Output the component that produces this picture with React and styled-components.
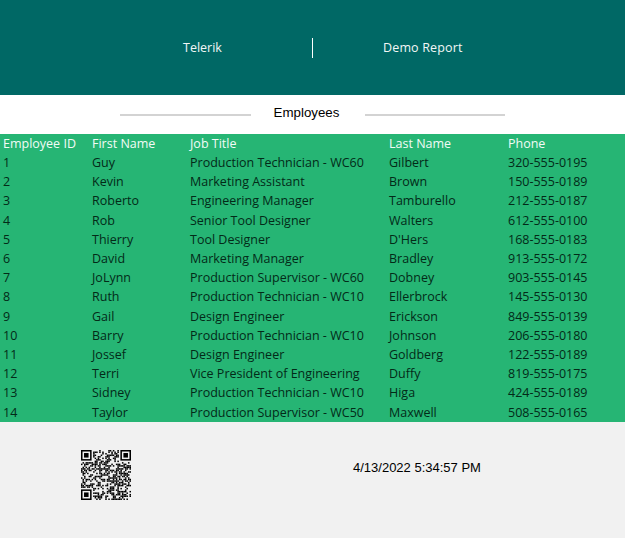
import React from 'react';
import styled, { createGlobalStyle } from 'styled-components';

const GlobalStyle = createGlobalStyle`
    html, body {
        margin: 0;
        padding: 0;
        background: #ffffff;
    }
`;

const employees = [
    [1, 'Guy', 'Production Technician - WC60', 'Gilbert', '320-555-0195'],
    [2, 'Kevin', 'Marketing Assistant', 'Brown', '150-555-0189'],
    [3, 'Roberto', 'Engineering Manager', 'Tamburello', '212-555-0187'],
    [4, 'Rob', 'Senior Tool Designer', 'Walters', '612-555-0100'],
    [5, 'Thierry', 'Tool Designer', "D'Hers", '168-555-0183'],
    [6, 'David', 'Marketing Manager', 'Bradley', '913-555-0172'],
    [7, 'JoLynn', 'Production Supervisor - WC60', 'Dobney', '903-555-0145'],
    [8, 'Ruth', 'Production Technician - WC10', 'Ellerbrock', '145-555-0130'],
    [9, 'Gail', 'Design Engineer', 'Erickson', '849-555-0139'],
    [10, 'Barry', 'Production Technician - WC10', 'Johnson', '206-555-0180'],
    [11, 'Jossef', 'Design Engineer', 'Goldberg', '122-555-0189'],
    [12, 'Terri', 'Vice President of Engineering', 'Duffy', '819-555-0175'],
    [13, 'Sidney', 'Production Technician - WC10', 'Higa', '424-555-0189'],
    [14, 'Taylor', 'Production Supervisor - WC50', 'Maxwell', '508-555-0165'],
];

const headers = ['Employee ID', 'First Name', 'Job Title', 'Last Name', 'Phone'];

// finder squares plus a stable pseudo random fill
const qrCells = () => {
    const size = 33;
    const cells = [];
    const inFinder = (x, y, ox, oy) => x >= ox && x < ox + 8 && y >= oy && y < oy + 8;
    let seed = 4132022;
    for (let y = 0; y < size; y++) {
        for (let x = 0; x < size; x++) {
            seed = (seed * 1103515245 + 12345) & 0x7fffffff;
            const finder = [[0, 0], [25, 0], [0, 25]].find(([ox, oy]) => inFinder(x, y, ox, oy));
            if (finder) continue;
            if ((seed >> 16) % 100 < 50) cells.push([x, y]);
        }
    }
    return cells;
};

const QrCode = () => (
    <QrSvg width="50" height="50" viewBox="0 0 33 33" aria-label="QR code">
        {qrCells().map(([x, y]) => (
            <rect key={`${x}-${y}`} x={x} y={y} width="1" height="1" fill="#000" />
        ))}
        {[[0, 0], [26, 0], [0, 26]].map(([x, y]) => (
            <g key={`${x}-${y}`}>
                <rect x={x + 0.5} y={y + 0.5} width="6" height="6" fill="none" stroke="#000" strokeWidth="1" />
                <rect x={x + 2} y={y + 2} width="3" height="3" fill="#000" />
            </g>
        ))}
    </QrSvg>
);

const App = () => (
    <Page>
        <GlobalStyle />
        <Banner>
            <BannerLeft>Telerik</BannerLeft>
            <BannerRight>Demo Report</BannerRight>
        </Banner>
        <TitleBar>
            <TitleLine />
            <Title>Employees</Title>
            <TitleLine />
        </TitleBar>
        <Table>
            <Row $head>
                {headers.map((h) => <Cell key={h}>{h}</Cell>)}
            </Row>
            {employees.map((row) => (
                <Row key={row[0]}>
                    {row.map((value, i) => <Cell key={i}>{value}</Cell>)}
                </Row>
            ))}
        </Table>
        <Footer>
            <QrSlot><QrCode /></QrSlot>
            <Stamp>4/13/2022 5:34:57 PM</Stamp>
        </Footer>
    </Page>
);

const Page = styled.div`
    width: 625px;
    height: 538px;
    overflow: hidden;
    display: flex;
    flex-direction: column;
`;

const Banner = styled.header`
    height: 95px;
    background-color: #006865;
    color: #f2f7f6;
    font-family: "Open Sans", "Noto Sans", sans-serif;
    font-size: 12.5px;
    display: grid;
    grid-template-columns: 313px 1fr;
    flex-shrink: 0;
`;

const BannerLeft = styled.div`
    height: 20px;
    line-height: 20px;
    margin-top: 38px;
    padding-left: 183px;
    border-right: 1px solid #ffffff;
`;

const BannerRight = styled.div`
    height: 20px;
    line-height: 20px;
    margin-top: 38px;
    padding-left: 70px;
    letter-spacing: 0.15px;
`;

const TitleBar = styled.div`
    height: 39px;
    background-color: #ffffff;
    display: grid;
    grid-template-columns: 131px 114px 140px;
    justify-content: start;
    padding-left: 120px;
    padding-bottom: 2px;
    box-sizing: border-box;
    align-items: center;
    flex-shrink: 0;
`;

const TitleLine = styled.div`
    height: 2px;
    background-color: #d3d3d3;
    margin-top: 3px;
`;

const Title = styled.div`
    font-family: "Liberation Sans", Arial, sans-serif;
    font-size: 13.3px;
    color: #000000;
    text-align: center;
    margin-top: -3px;
    padding-right: 3px;
`;

const Table = styled.div`
    height: 288px;
    background-color: #26b574;
    font-family: "Open Sans", "Noto Sans", sans-serif;
    font-size: 12.5px;
    flex-shrink: 0;
`;

const Row = styled.div`
    height: ${(p) => (p.$head ? '19px' : '19.21px')};
    line-height: 19px;
    display: grid;
    grid-template-columns: 92px 98px 199px 119px 1fr;
    color: ${(p) => (p.$head ? '#f2fbf6' : '#032a18')};
`;

const Cell = styled.div`
    white-space: nowrap;
    &:first-child {
        padding-left: 3px;
    }
`;

const Footer = styled.footer`
    flex: 1;
    background-color: #f1f1f1;
    display: grid;
    grid-template-columns: 353px 1fr;
    align-items: start;
`;

const QrSlot = styled.div`
    padding: 28px 0 0 81px;
    line-height: 0;
`;

const QrSvg = styled.svg`
    filter: blur(0.3px);
`;

const Stamp = styled.div`
    margin-top: 38px;
    font-family: "Liberation Sans", Arial, sans-serif;
    font-size: 13px;
    line-height: 15px;
    color: #000000;
`;

export default App;
